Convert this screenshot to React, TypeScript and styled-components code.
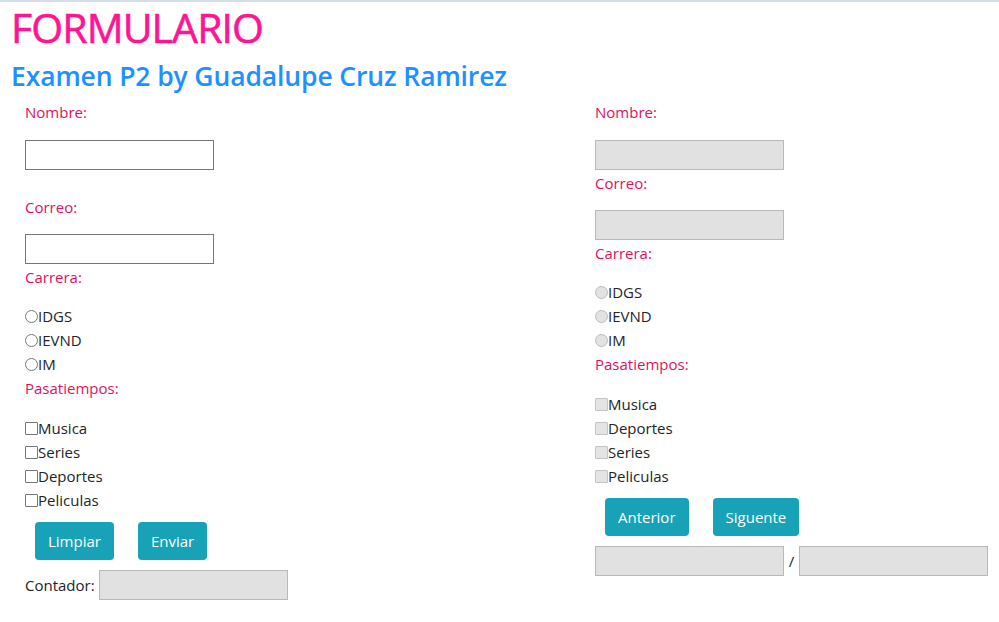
import React from "react";
import styled, { createGlobalStyle } from "styled-components";

const Global = createGlobalStyle`
  html, body { margin: 0; padding: 0; background: #fff; }
  body {
    border-top: 2px solid #d6dee7;
    font-family: "Open Sans", "Noto Sans", sans-serif;
    font-size: 16px;
    line-height: 24px;
    color: #212529;
  }
  * { box-sizing: border-box; }
`;

const Page = styled.div`
  width: 999px;
`;

const Header = styled.header`
  padding-left: 11px;
`;

const Title = styled.h1`
  margin: 0;
  height: 50px;
  font-size: 41px;
  line-height: 50px;
  font-weight: 400;
  color: #ff1493;
  letter-spacing: -0.9px;
  -webkit-text-stroke: 0.6px #ff1493;
`;

const Subtitle = styled.h3`
  margin: 0;
  height: 48px;
  font-size: 26.5px;
  line-height: 48px;
  font-weight: 600;
  color: #1e90ff;
  letter-spacing: -0.12px;
`;

const Columns = styled.main`
  display: grid;
  grid-template-columns: 570px 1fr;
  padding-left: 25px;
`;

const Column = styled.section`
  display: flex;
  flex-direction: column;
  align-items: flex-start;
`;

const Label = styled.label<{ $top?: number; $bottom?: number }>`
  display: block;
  height: 24px;
  line-height: 24px;
  font-size: 15px;
  color: #e0115f;
  margin-top: ${(p) => p.$top ?? 0}px;
  margin-bottom: ${(p) => p.$bottom ?? 15}px;
`;

const TextInput = styled.input`
  display: block;
  width: 189px;
  height: 30px;
  margin: 0;
  padding: 1px 2px;
  border: 1px solid #767676;
  background: #fff;
  font: inherit;

  &:disabled {
    background: #e1e1e1;
    border-color: #b9b9b9;
  }
`;

const OptionRow = styled.label`
  display: flex;
  align-items: center;
  height: 24px;
  font-size: 15px;
  color: #212529;
`;

const Radio = styled.input.attrs({ type: "radio" })`
  appearance: none;
  width: 13px;
  height: 13px;
  margin: 0;
  border: 1px solid #767676;
  border-radius: 50%;
  background: #fff;

  &:disabled {
    background: #e2e2e2;
    border-color: #bcbcbc;
  }
`;

const Check = styled.input.attrs({ type: "checkbox" })`
  appearance: none;
  width: 13px;
  height: 13px;
  margin: 0;
  border: 1px solid #767676;
  border-radius: 1px;
  background: #fff;

  &:disabled {
    background: #e4e4e4;
    border-color: #c4c4c4;
  }
`;

const ButtonRow = styled.div`
  display: flex;
  gap: 24px;
  margin: 10px 0 0 10px;
`;

const Button = styled.button`
  height: 38px;
  padding: 0 13px;
  border: none;
  border-radius: 4px;
  background: #17a2b8;
  color: #fff;
  font-family: inherit;
  font-size: 15px;
  cursor: pointer;
`;

const InlineRow = styled.div`
  display: flex;
  align-items: center;
  gap: 4px;
  margin-top: 10px;
  font-size: 15px;
`;

const Slash = styled.span`
  width: 7px;
  text-align: center;
`;

const carreras = ["IDGS", "IEVND", "IM"];

export default function App() {
  return (
    <Page>
      <Global />
      <Header>
        <Title>FORMULARIO</Title>
        <Subtitle>Examen P2 by Guadalupe Cruz Ramirez</Subtitle>
      </Header>
      <Columns>
        <Column>
          <Label $bottom={16}>Nombre:</Label>
          <TextInput type="text" />
          <Label $top={25}>Correo:</Label>
          <TextInput type="text" />
          <Label $top={1}>Carrera:</Label>
          {carreras.map((c) => (
            <OptionRow key={c}>
              <Radio name="carrera" />
              {c}
            </OptionRow>
          ))}
          <Label $bottom={16}>Pasatiempos:</Label>
          {["Musica", "Series", "Deportes", "Peliculas"].map((h) => (
            <OptionRow key={h}>
              <Check />
              {h}
            </OptionRow>
          ))}
          <ButtonRow>
            <Button>Limpiar</Button>
            <Button>Enviar</Button>
          </ButtonRow>
          <InlineRow>
            Contador:
            <TextInput type="text" disabled />
          </InlineRow>
        </Column>
        <Column>
          <Label $bottom={16}>Nombre:</Label>
          <TextInput type="text" disabled />
          <Label $top={1}>Correo:</Label>
          <TextInput type="text" disabled />
          <Label $top={1}>Carrera:</Label>
          {carreras.map((c) => (
            <OptionRow key={c}>
              <Radio name="carrera2" disabled />
              {c}
            </OptionRow>
          ))}
          <Label $bottom={16}>Pasatiempos:</Label>
          {["Musica", "Deportes", "Series", "Peliculas"].map((h) => (
            <OptionRow key={h}>
              <Check disabled />
              {h}
            </OptionRow>
          ))}
          <ButtonRow>
            <Button>Anterior</Button>
            <Button>Siguente</Button>
          </ButtonRow>
          <InlineRow>
            <TextInput type="text" disabled />
            <Slash>/</Slash>
            <TextInput type="text" disabled />
          </InlineRow>
        </Column>
      </Columns>
    </Page>
  );
}
